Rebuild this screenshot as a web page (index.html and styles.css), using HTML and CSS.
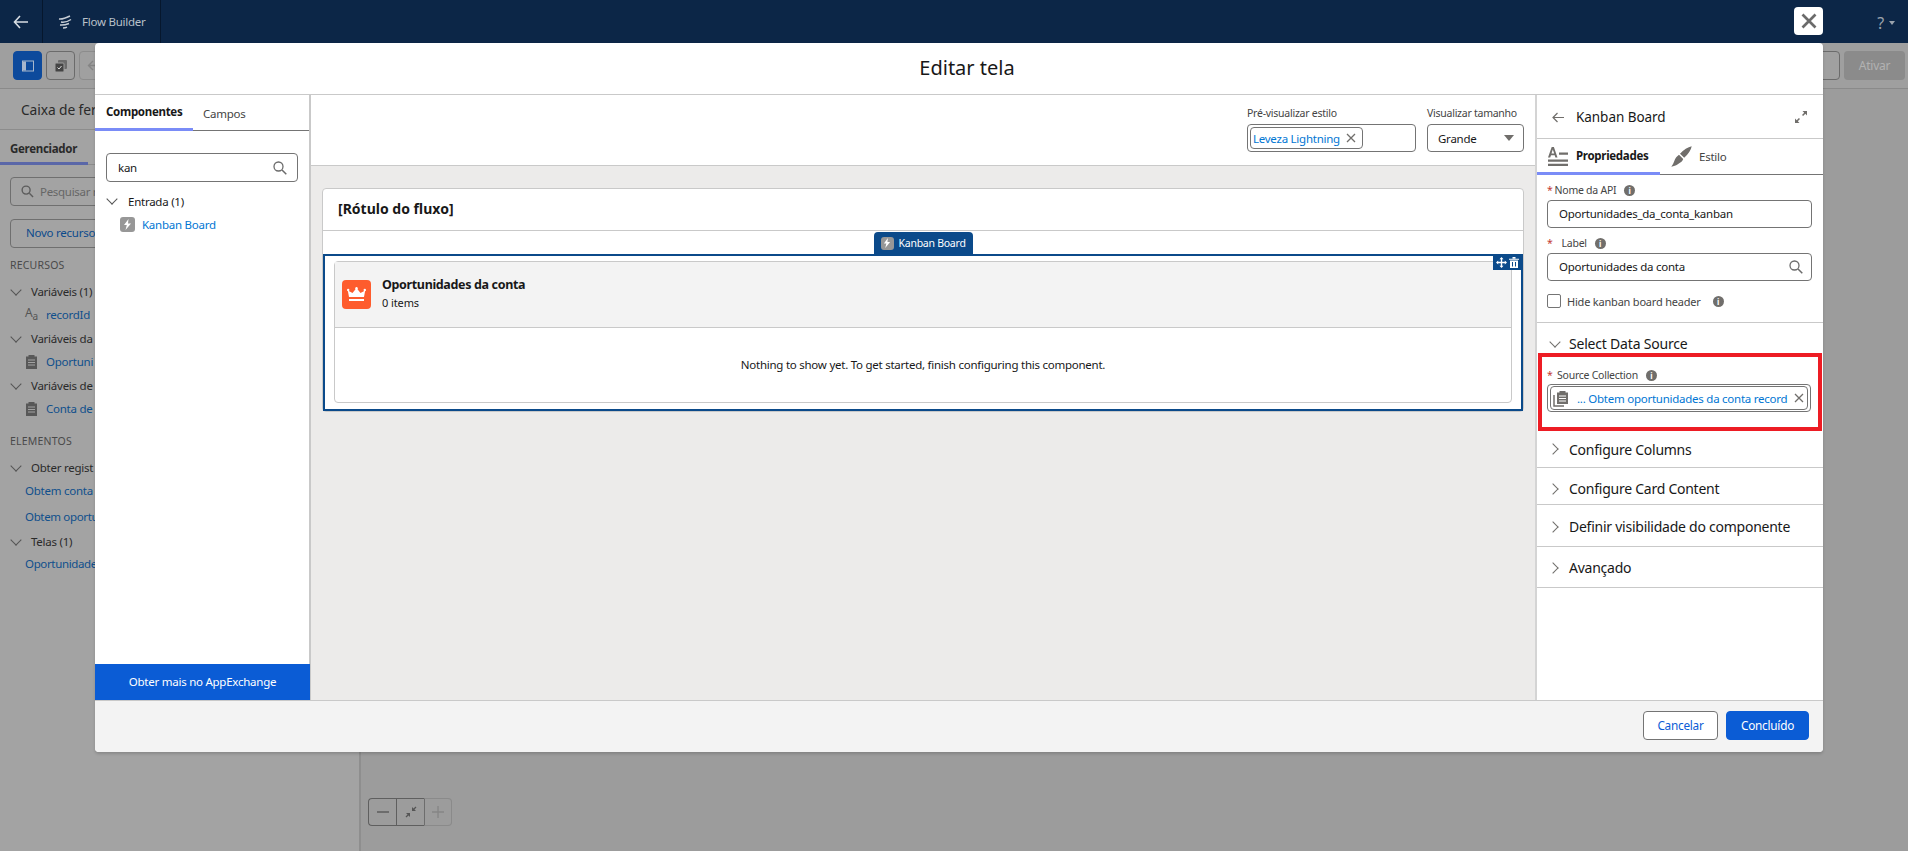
FILE: index.html
```html
<!DOCTYPE html>
<html lang="pt-BR">
<head>
<meta charset="utf-8">
<title>Flow Builder</title>
<link rel="stylesheet" href="styles.css">
</head>
<body>
<div class="app">
  <header class="topbar">
    <div class="tb-back"><svg width="16" height="14" viewBox="0 0 16 14"><path d="M7 1 1.500 7 7 13M1.500 7H15" fill="none" stroke="#d8dde3" stroke-width="1.600"/></svg></div>
    <div class="tb-title">
      <svg width="15" height="14" viewBox="0 0 15 14"><path d="M1 4c4 .5 7-1 11-3M3 7c3 .5 7-.5 10-2.500M2 10c3 .3 6-.3 9-1.500M5 13c1.500 0 3-.3 4-.8" fill="none" stroke="#c8ced6" stroke-width="1.500"/></svg>
      <span>Flow Builder</span>
    </div>
    <div class="tb-help">? <i class="caret-sm"></i></div>
  </header>
  <div class="toolbar">
    <button class="tool tool-on"><svg width="12" height="12" viewBox="0 0 12 12"><rect x=".5" y="1" width="11" height="10" fill="none" stroke="#a8b7cc"/><rect x="1" y="1.500" width="3" height="9" fill="#a8b7cc"/></svg></button>
    <button class="tool"><svg width="14" height="14" viewBox="0 0 14 14"><rect x="4" y="1" width="9" height="9" rx="1" fill="#6c6c6c"/><rect x="1" y="4" width="9" height="9" rx="1" fill="#444" stroke="#9e9e9e"/><path d="m3.500 8.500 1.500 1.500 2.500-3" fill="none" stroke="#ddd"/></svg></button>
    <button class="tool tool-off"><svg width="14" height="12" viewBox="0 0 14 12"><path d="M6 1 1.500 5.500 6 10M1.500 5.500H14" fill="none" stroke="#858585" stroke-width="1.400"/></svg></button>
    <div class="toolbar-fill"></div>
    <button class="tool tool-wide"></button>
    <button class="activate">Ativar</button>
  </div>
  <div class="main">
    <aside class="sidebar">
      <div class="side-clip">
        <div class="side-title">Caixa de fer</div>
        <div class="side-tabs"><span class="side-tab">Gerenciador</span></div>
        <div class="side-body">
          <div class="side-search"><svg width="13" height="13" viewBox="0 0 14 14"><circle cx="5.500" cy="5.500" r="4.300" fill="none" stroke="#5c5c5c" stroke-width="1.500"/><path d="m9 9 4 4" stroke="#5c5c5c" stroke-width="1.500"/></svg><span>Pesquisar r</span></div>
          <div class="side-new">Novo recurso</div>
          <div class="side-head side-h1">RECURSOS</div>
          <div class="side-group"><i class="chev-down"></i>Variáveis (1)</div>
          <div class="side-item"><span class="aa">A<sub>a</sub></span><a>recordId</a></div>
          <div class="side-group"><i class="chev-down"></i>Variáveis da</div>
          <div class="side-item"><svg class="clip" width="13" height="15" viewBox="0 0 13 15"><path d="M1 2.500h2.500V1h6v1.500H12V15H1z" fill="#585858"/><path d="M3 6h7M3 8.500h7M3 11h7" stroke="#a3a3a3"/></svg><a>Oportuni</a></div>
          <div class="side-group"><i class="chev-down"></i>Variáveis de</div>
          <div class="side-item"><svg class="clip" width="13" height="15" viewBox="0 0 13 15"><path d="M1 2.500h2.500V1h6v1.500H12V15H1z" fill="#585858"/><path d="M3 6h7M3 8.500h7M3 11h7" stroke="#a3a3a3"/></svg><a>Conta de</a></div>
          <div class="side-head side-h2">ELEMENTOS</div>
          <div class="side-group side-group-b"><i class="chev-down"></i>Obter regist</div>
          <div class="side-link"><a>Obtem conta</a></div>
          <div class="side-link side-link-b"><a>Obtem oportu</a></div>
          <div class="side-group side-group-c"><i class="chev-down"></i>Telas (1)</div>
          <div class="side-link side-link-c"><a>Oportunidade</a></div>
        </div>
      </div>
    </aside>
    <section class="canvas">
      <div class="zoom-ctl">
        <span class="zc"><svg width="12" height="12" viewBox="0 0 12 12"><path d="M0 6h12" stroke="#5c5c5c" stroke-width="1.500"/></svg></span>
        <span class="zc"><svg width="12" height="12" viewBox="0 0 12 12"><path d="m1 11 3.500-3.500M11 1 7.500 4.500" stroke="#555" stroke-width="1.300"/><path d="M1 7h4v4zM11 5H7V1z" fill="#555"/></svg></span>
        <span class="zc zc-off"><svg width="12" height="12" viewBox="0 0 12 12"><path d="M0 6h12M6 0v12" stroke="#858585" stroke-width="1.300"/></svg></span>
      </div>
    </section>
  </div>
</div>

<button class="modal-close" aria-label="Fechar"><svg width="16" height="16" viewBox="0 0 16 16"><path d="m1.500 1.500 13 13M14.500 1.500l-13 13" stroke="#6b6b6b" stroke-width="2.700"/></svg></button>

<div class="modal">
  <div class="modal-head">Editar tela</div>
  <div class="modal-body">
    <aside class="palette">
      <div class="tabs">
        <span class="tab tab-active pal-tab-a">Componentes</span>
        <span class="tab pal-tab-b">Campos</span>
      </div>
      <div class="pal-search"><span>kan</span><svg class="search-ico" width="14" height="14" viewBox="0 0 14 14"><circle cx="5.500" cy="5.500" r="4.500" fill="none" stroke="#6b6b6b" stroke-width="1.300"/><path d="m9 9 4.300 4.300" stroke="#6b6b6b" stroke-width="1.500"/></svg></div>
      <div class="pal-group"><i class="chev-down"></i>Entrada (1)</div>
      <div class="pal-item">
        <span class="bolt-box"><svg width="9" height="11" viewBox="0 0 9 11"><path d="M5.500 0 1 6h2.800L2.500 11 8 4.500H5z" fill="#fff"/></svg></span>
        <a>Kanban Board</a>
      </div>
      <div class="pal-spacer"></div>
      <div class="pal-more">Obter mais no AppExchange</div>
    </aside>

    <section class="stage">
      <div class="stage-top">
        <div class="field field-style">
          <div class="flabel">Pré-visualizar estilo</div>
          <div class="pick"><span class="pill"><a>Leveza Lightning</a><svg width="10" height="10" viewBox="0 0 10 10"><path d="m1 1 8 8M9 1 1 9" stroke="#706e6b" stroke-width="1.300"/></svg></span></div>
        </div>
        <div class="field field-size">
          <div class="flabel">Visualizar tamanho</div>
          <div class="select"><span>Grande</span><i class="caret"></i></div>
        </div>
      </div>
      <div class="stage-canvas">
        <div class="screen">
          <div class="screen-head">[Rótulo do fluxo]</div>
          <div class="chip-row">
            <span class="chip"><span class="bolt-box bolt-small"><svg width="8" height="10" viewBox="0 0 9 11"><path d="M5.500 0 1 6h2.800L2.500 11 8 4.500H5z" fill="#fff"/></svg></span>Kanban Board</span>
          </div>
          <div class="selected">
            <div class="sel-actions">
              <svg width="11" height="11" viewBox="0 0 11 11"><path d="M5.500 0 7.500 2.200H6.200V4.800H8.800V3.500L11 5.500 8.800 7.500V6.200H6.200V8.800H7.500L5.500 11 3.500 8.800H4.800V6.200H2.200V7.500L0 5.500 2.200 3.500V4.800H4.800V2.200H3.500z" fill="#fff"/></svg>
              <svg width="10" height="11" viewBox="0 0 10 11"><path d="M0 1.800h10v1H0zM3.500 0h3v1.500h-3zM1 3.500h8V11H1z" fill="#fff"/><path d="M3.500 5v4.500M6.500 5v4.500" stroke="#0b4a8a"/></svg>
            </div>
            <div class="kanban">
              <div class="kanban-head">
                <span class="crown"><svg width="19" height="15" viewBox="0 0 19 15"><path d="M2 10 .8 3.500 5.500 6 9.500 1l4 5 4.700-2.500L17 10z" fill="#fff"/><circle cx="1.200" cy="3" r="1.200" fill="#fff"/><circle cx="9.500" cy="1.200" r="1.200" fill="#fff"/><circle cx="17.800" cy="3" r="1.200" fill="#fff"/><rect x="2" y="12" width="15" height="2" fill="#fff"/></svg></span>
                <div class="kanban-text">
                  <div class="kanban-title">Oportunidades da conta</div>
                  <div class="kanban-sub">0 items</div>
                </div>
              </div>
              <div class="kanban-empty">Nothing to show yet. To get started, finish configuring this component.</div>
            </div>
          </div>
        </div>
      </div>
    </section>

    <aside class="props">
      <div class="props-head">
        <svg width="12" height="11" viewBox="0 0 12 11"><path d="M5.500 1 1 5.500l4.500 4.500M1 5.500h11" fill="none" stroke="#706e6b" stroke-width="1.200"/></svg>
        <span class="props-title">Kanban Board</span>
        <svg class="expand" width="12" height="12" viewBox="0 0 12 12"><path d="M12 0H7.500L9.200 1.700 7 3.900 8.100 5 10.300 2.800 12 4.500zM0 12h4.500L2.800 10.300 5 8.100 3.900 7 1.700 9.200 0 7.500z" fill="#706e6b"/></svg>
      </div>
      <div class="tabs props-tabs">
        <span class="tab tab-active prop-tab-a">
          <svg width="20" height="20" viewBox="0 0 20 20"><path d="M0 11.500 3.700 1h2.200L9.500 11.500H7.400L6.700 9.200H3L2.200 11.500zM3.500 7.600h2.700L4.800 3.400zM11 6.500h9v2.300h-9zM0 13.500h20v2.300H0zM0 17.700h20V20H0z" fill="#706e6b"/></svg>
          Propriedades
        </span>
        <span class="tab prop-tab-b">
          <svg width="21" height="21" viewBox="0 0 21 21"><path d="M20.700.3c-.5 3.500-3.500 8-7.500 11.500L9 7.700C12.500 4 17 1 20.700.3zM8 8.800l4.200 4.200c-.7 2.500-2.500 3.300-4 4.300-1.700 1.100-3.800 3-7.900 3.400 1.500-1.700 2.200-3.800 3-5.700C4.200 12.500 6 10 8 8.800z" fill="#706e6b"/></svg>
          Estilo
        </span>
      </div>
      <div class="props-form">
        <div class="plabel"><b>*</b> Nome da API <i class="info">i</i></div>
        <div class="pinput">Oportunidades_da_conta_kanban</div>
        <div class="plabel plabel-second"><b>*</b><span class="label-gap">Label</span> <i class="info">i</i></div>
        <div class="pinput pinput-search"><span>Oportunidades da conta</span><svg width="14" height="14" viewBox="0 0 14 14"><circle cx="5.500" cy="5.500" r="4.500" fill="none" stroke="#6b6b6b" stroke-width="1.300"/><path d="m9 9 4.300 4.300" stroke="#6b6b6b" stroke-width="1.500"/></svg></div>
        <label class="pcheck"><span class="box"></span>Hide kanban board header <i class="info">i</i></label>
      </div>
      <div class="sec-open"><i class="chev-down"></i>Select Data Source</div>
      <div class="redbox">
        <div class="plabel plabel-red"><b>*</b>&nbsp;Source Collection <i class="info">i</i></div>
        <div class="srcwrap">
          <div class="srcpill">
            <svg class="srcico" width="17" height="17" viewBox="0 0 17 17"><path d="M1 5v11h10" fill="none" stroke="#706e6b" stroke-width="1.500"/><path d="M4 2.500h2.500V1h6v1.500H15V14H4z" fill="#706e6b"/><path d="M6 6h7M6 8.500h7M6 11h7" stroke="#fff"/></svg>
            <a>... Obtem oportunidades da conta record</a>
            <svg class="srcx" width="10" height="10" viewBox="0 0 10 10"><path d="m1 1 8 8M9 1 1 9" stroke="#706e6b" stroke-width="1.300"/></svg>
          </div>
        </div>
      </div>
      <div class="sec sec-a"><i class="chev-right"></i>Configure Columns</div>
      <div class="sec sec-b"><i class="chev-right"></i>Configure Card Content</div>
      <div class="sec sec-c"><i class="chev-right"></i>Definir visibilidade do componente</div>
      <div class="sec sec-d"><i class="chev-right"></i>Avançado</div>
    </aside>
  </div>
  <div class="modal-foot">
    <button class="btn btn-out">Cancelar</button>
    <button class="btn btn-brand">Concluído</button>
  </div>
</div>
</body>
</html>
```
FILE: styles.css
```css
* { box-sizing: border-box; }
html, body { margin: 0; padding: 0; }
body {
  width: 1908px; height: 851px; overflow: hidden; position: relative;
  font-family: "Noto Sans", "Open Sans", sans-serif; font-size: 11.500px; letter-spacing: -.25px; color: #181818;
  background: #9c9c9c;
}
a { color: #0176d3; text-decoration: none; }
i { font-style: normal; }
button { font-family: inherit; padding: 0; letter-spacing: inherit; }

.app { display: flex; flex-direction: column; height: 851px; }

/* top bar */
.topbar { height: 43px; flex: none; background: #0c2647; display: flex; align-items: stretch; color: #b9c0c9; }
.tb-back { width: 43px; display: flex; align-items: center; justify-content: center; border-right: 1px solid #06172d; }
.tb-title { width: 118px; display: flex; align-items: center; gap: 9px; padding-left: 15px; border-right: 1px solid #06172d; }
.tb-help { margin-left: auto; margin-right: 13px; align-self: center; font-size: 16px; color: #9ba3ad; display: flex; align-items: center; gap: 5px; margin-top: 2px; }
.caret-sm { border: 3px solid transparent; border-top: 4px solid #9ba3ad; border-bottom: 0; }

/* toolbar */
.toolbar { height: 46px; flex: none; display: flex; align-items: center; padding: 0 3px 0 13px; gap: 4px; background: #9f9f9f; border-bottom: 1px solid #8a8a8a; }
.tool { width: 29px; height: 29px; background: #a0a0a0; border: 1px solid #6b6b6b; border-radius: 4px; display: flex; align-items: center; justify-content: center; }
.tool-on { background: #0d4a9c; border-color: #0d4a9c; }
.tool-off { border-color: #8c8c8c; }
.toolbar-fill { flex: 1; }
.tool-wide { width: 30px; }
.activate { width: 61px; height: 29px; background: #8b8b8b; color: #b2b2b2; border: 0; border-radius: 4px; font-size: 12px; }

.main { flex: 1; display: flex; min-height: 0; }

/* sidebar behind modal */
.sidebar { width: 361px; flex: none; background: #a3a3a3; border-right: 2px solid #8e8e8e; white-space: nowrap; color: #2a2a2a; }
.side-clip { width: 95px; overflow: hidden; height: 100%; }
.side-title { height: 41px; line-height: 42px; padding-left: 21px; font-size: 13.800px; letter-spacing: -.1px; border-bottom: 1px solid #8c8c8c; }
.side-tabs { height: 35px; border-bottom: 1px solid #8c8c8c; }
.side-tab { display: block; width: 88px; height: 35px; padding-left: 10px; line-height: 37px; font-weight: 700; letter-spacing: -.3px; border-bottom: 3px solid #5a67a8; }
.side-body { padding: 12px 0 0 10px; }
.side-search { height: 29px; width: 300px; border: 1px solid #6f6f6f; border-radius: 4px; display: flex; align-items: center; gap: 6px; padding-left: 10px; color: #666; letter-spacing: -.3px; }
.side-new { height: 29px; width: 300px; margin-top: 13px; border: 1px solid #6f6f6f; border-radius: 4px; padding-left: 15px; line-height: 26px; color: #0c4a8c; }
.side-head { font-size: 10.500px; letter-spacing: .2px; color: #4a4a4a; height: 16px; line-height: 16px; }
.side-h1 { margin-top: 9px; margin-bottom: 7px; }
.side-h2 { margin-top: 13px; }
.side-group { height: 23px; display: flex; align-items: center; margin-top: 1px; }
.side-group .chev-down { margin: 0 11px 3px 2px; }
.side-group-b { margin-top: 7px; }
.side-group-c { margin-top: 2px; }
.side-item { height: 23px; padding-left: 15px; display: flex; align-items: center; gap: 8px; }
.side-item a, .side-link a { color: #0f4f8c; }
.aa { width: 13px; font-size: 12px; color: #555; line-height: 1; }
.aa sub { font-size: 10px; }
.clip { flex: none; }
.side-link { height: 23px; padding-left: 15px; line-height: 23px; }
.side-link-b { margin-top: 3px; letter-spacing: -.35px; }
.side-link-c { margin-top: -1px; letter-spacing: -.35px; }

.chev-down { display: inline-block; flex: none; width: 8px; height: 8px; border-right: 1.300px solid #555; border-bottom: 1.300px solid #555; transform: rotate(45deg); }
.chev-right { display: inline-block; flex: none; width: 8px; height: 8px; border-right: 1.300px solid #706e6b; border-top: 1.300px solid #706e6b; transform: rotate(45deg); }

.canvas { flex: 1; background: #9c9c9c; display: flex; align-items: flex-end; padding: 0 0 25px 7px; }
.zoom-ctl { display: flex; height: 28px; }
.zc { width: 28px; border: 1px solid #5f5f5f; border-right-width: 0; display: flex; align-items: center; justify-content: center; }
.zc:first-child { border-radius: 4px 0 0 4px; }
.zc-off { border-color: #8a8a8a; border-right-width: 1px; border-radius: 0 4px 4px 0; border-left-color: #6d6d6d; }

/* modal */
.modal-close { position: absolute; left: 1794px; top: 7px; width: 29px; height: 28px; background: #fff; border: 0; border-radius: 4px; display: flex; align-items: center; justify-content: center; }
.modal { position: absolute; left: 95px; top: 43px; width: 1728px; height: 709px; background: #fff; border-radius: 4px; display: flex; flex-direction: column; box-shadow: 0 2px 3px rgba(0,0,0,.16); overflow: hidden; }
.modal-head { height: 52px; flex: none; border-bottom: 1px solid #c9c9c9; text-align: center; padding-left: 16px; font-size: 20px; letter-spacing: 0; line-height: 50px; color: #181818; }
.modal-body { flex: 1; min-height: 0; display: flex; }
.modal-foot { height: 52px; flex: none; background: #f3f3f3; border-top: 1px solid #c9c9c9; display: flex; justify-content: flex-end; align-items: center; gap: 8px; padding: 0 14px 3px 0; }
.btn { height: 29px; border-radius: 4px; font-size: 11.800px; }
.btn-out { width: 75px; background: #fff; border: 1px solid #747474; color: #0b5cd5; }
.btn-brand { width: 83px; background: #0b5cd5; border: 1px solid #0b5cd5; color: #fff; }

.tabs { display: flex; border-bottom: 1px solid #747474; height: 36px; flex: none; }
.tab { display: flex; align-items: center; height: 36px; color: #444; }
.tab-active { font-weight: 700; letter-spacing: -.3px; color: #181818; border-bottom: 3px solid #7a8cf7; }

/* palette */
.palette { width: 216px; flex: none; border-right: 2px solid #c9c9c9; display: flex; flex-direction: column; }
.pal-tab-a { width: 98px; padding: 0 0 0 11px; }
.pal-tab-b { padding: 0 0 0 10px; }
.pal-search { height: 29px; margin: 22px 11px 0; border: 1px solid #747474; border-radius: 4px; display: flex; align-items: center; justify-content: space-between; padding: 0 10px 0 11px; flex: none; }
.pal-group { flex: none; height: 22px; margin-top: 8px; padding-left: 13px; display: flex; align-items: center; gap: 12px; }
.pal-group .chev-down { margin-bottom: 4px; }
.pal-item { flex: none; height: 24px; padding-left: 25px; display: flex; align-items: center; gap: 7px; }
.bolt-box { width: 15px; height: 15px; background: #979797; border-radius: 3px; display: inline-flex; align-items: center; justify-content: center; flex: none; }
.bolt-small { width: 13px; height: 13px; }
.pal-spacer { flex: 1; }
.pal-more { flex: none; height: 36px; background: #0b5cd5; color: #fff; text-align: center; line-height: 36px; margin-right: -1px; }

/* stage */
.stage { flex: 1; min-width: 0; display: flex; flex-direction: column; }
.stage-top { height: 71px; flex: none; border-bottom: 1px solid #c9c9c9; display: flex; justify-content: flex-end; align-items: flex-end; gap: 11px; padding: 0 11px 13px 0; }
.flabel { color: #444; font-size: 10.500px; height: 19px; line-height: 17px; white-space: nowrap; }
.field-style { width: 169px; }
.field-size { width: 97px; }
.pick { height: 28px; border: 1px solid #747474; border-radius: 4px; padding: 2px; display: flex; }
.pill { height: 22px; display: inline-flex; align-items: center; gap: 6px; border: 1px solid #747474; border-radius: 4px; padding: 0 6px 0 2px; }
.select { height: 28px; border: 1px solid #747474; border-radius: 4px; display: flex; align-items: center; justify-content: space-between; padding: 0 9px 0 10px; }
.caret { border: 5px solid transparent; border-top: 6px solid #706e6b; border-bottom: 0; }
.stage-canvas { flex: 1; background: #ecebea; padding: 22px 11px 0; }
.screen { background: #fff; border: 1px solid #c9c9c9; border-radius: 4px; }
.screen-head { height: 42px; border-bottom: 1px solid #c9c9c9; padding-left: 15px; line-height: 40px; font-size: 14px; letter-spacing: 0; font-weight: 700; }
.chip-row { height: 23px; display: flex; justify-content: center; align-items: flex-end; }
.chip { height: 22px; width: 99px; background: #0b4a8a; color: #fff; border-radius: 4px 4px 0 0; font-size: 10.500px; display: flex; align-items: center; gap: 5px; padding-left: 7px; white-space: nowrap; }
.selected { position: relative; height: 157px; border: 2px solid #0b4a8a; padding: 5px 9px; }
.sel-actions { position: absolute; right: 0; top: -1px; width: 28px; height: 15px; background: #0b4a8a; display: flex; align-items: center; justify-content: center; gap: 2px; }
.kanban { height: 142px; border: 1px solid #c9c9c9; border-radius: 4px; }
.kanban-head { height: 66px; background: #f3f3f3; border-bottom: 1px solid #c9c9c9; display: flex; align-items: center; gap: 11px; padding-left: 7px; }
.kanban-text { padding-bottom: 2px; }
.crown { width: 29px; height: 29px; background: #fe5c2d; border-radius: 4px; display: flex; align-items: center; justify-content: center; flex: none; }
.kanban-title { font-weight: 700; font-size: 12.500px; letter-spacing: -.35px; line-height: 18px; }
.kanban-sub { font-size: 11px; letter-spacing: -.1px; line-height: 18px; }
.kanban-empty { text-align: center; line-height: 74px; }

/* props */
.props { width: 288px; flex: none; border-left: 2px solid #d4d4d4; }
.props-head { height: 44px; border-bottom: 1px solid #c9c9c9; display: flex; align-items: center; padding: 1px 16px 0 15px; }
.props-title { margin-left: 12px; font-size: 13.500px; letter-spacing: -.05px; flex: 1; }
.props-tabs { height: 36px; }
.prop-tab-a { width: 123px; gap: 8px; padding: 0 0 0 11px; white-space: nowrap; }
.prop-tab-b { gap: 7px; padding: 0 0 2px 11px; }
.props-form { padding: 6px 11px 0 10px; height: 148px; border-bottom: 1px solid #c9c9c9; }
.plabel { height: 18px; margin-bottom: 1px; display: flex; align-items: center; gap: 2px; font-size: 10.500px; color: #444; white-space: nowrap; }
.plabel b { color: #c23934; font-weight: 400; }
.label-gap { margin-left: 7px; }
.plabel-second { margin-top: 6px; }
.info { width: 11px; height: 11px; margin-left: 6px; border-radius: 50%; background: #706e6b; color: #fff; font-size: 8px; letter-spacing: 0; font-weight: 700; line-height: 11px; text-align: center; display: inline-block; }
.pinput { height: 28px; border: 1px solid #747474; border-radius: 4px; padding-left: 11px; line-height: 26px; display: flex; align-items: center; justify-content: space-between; }
.pinput-search { padding-right: 8px; }
.pcheck { display: flex; align-items: center; gap: 6px; margin-top: 11px; height: 18px; font-size: 11px; letter-spacing: -.2px; color: #444; }
.box { width: 14px; height: 14px; background: #fff; border: 1px solid #747474; border-radius: 2px; }
.sec-open { height: 30px; display: flex; align-items: center; gap: 10px; padding: 11px 0 0 14px; font-size: 14px; letter-spacing: -.2px; }
.sec-open .chev-down { border-color: #706e6b; margin-bottom: 4px; }
.redbox { height: 78px; margin: 0 1px; border: 4px solid #ed1c24; padding: 5px 7px 5px 5px; }
.plabel-red { margin: 4px 0 0; }
.srcwrap { height: 28px; border: 1px solid #747474; border-radius: 4px; padding: 1px 2px; }
.srcpill { height: 24px; border: 1px solid #747474; border-radius: 4px; display: flex; align-items: center; padding: 0 6px 0 2px; gap: 7px; white-space: nowrap; overflow: hidden; }
.srcico { flex: none; }
.srcx { margin-left: auto; flex: none; }
.sec { display: flex; align-items: center; gap: 12px; padding: 0 0 0 12px; font-size: 14px; letter-spacing: -.25px; border-bottom: 1px solid #c9c9c9; }
.sec-a { height: 37px; }
.sec-b { height: 37px; padding-top: 5px; }
.sec-c { height: 42px; padding-top: 2px; }
.sec-d { height: 41px; padding-top: 1px; }
```
